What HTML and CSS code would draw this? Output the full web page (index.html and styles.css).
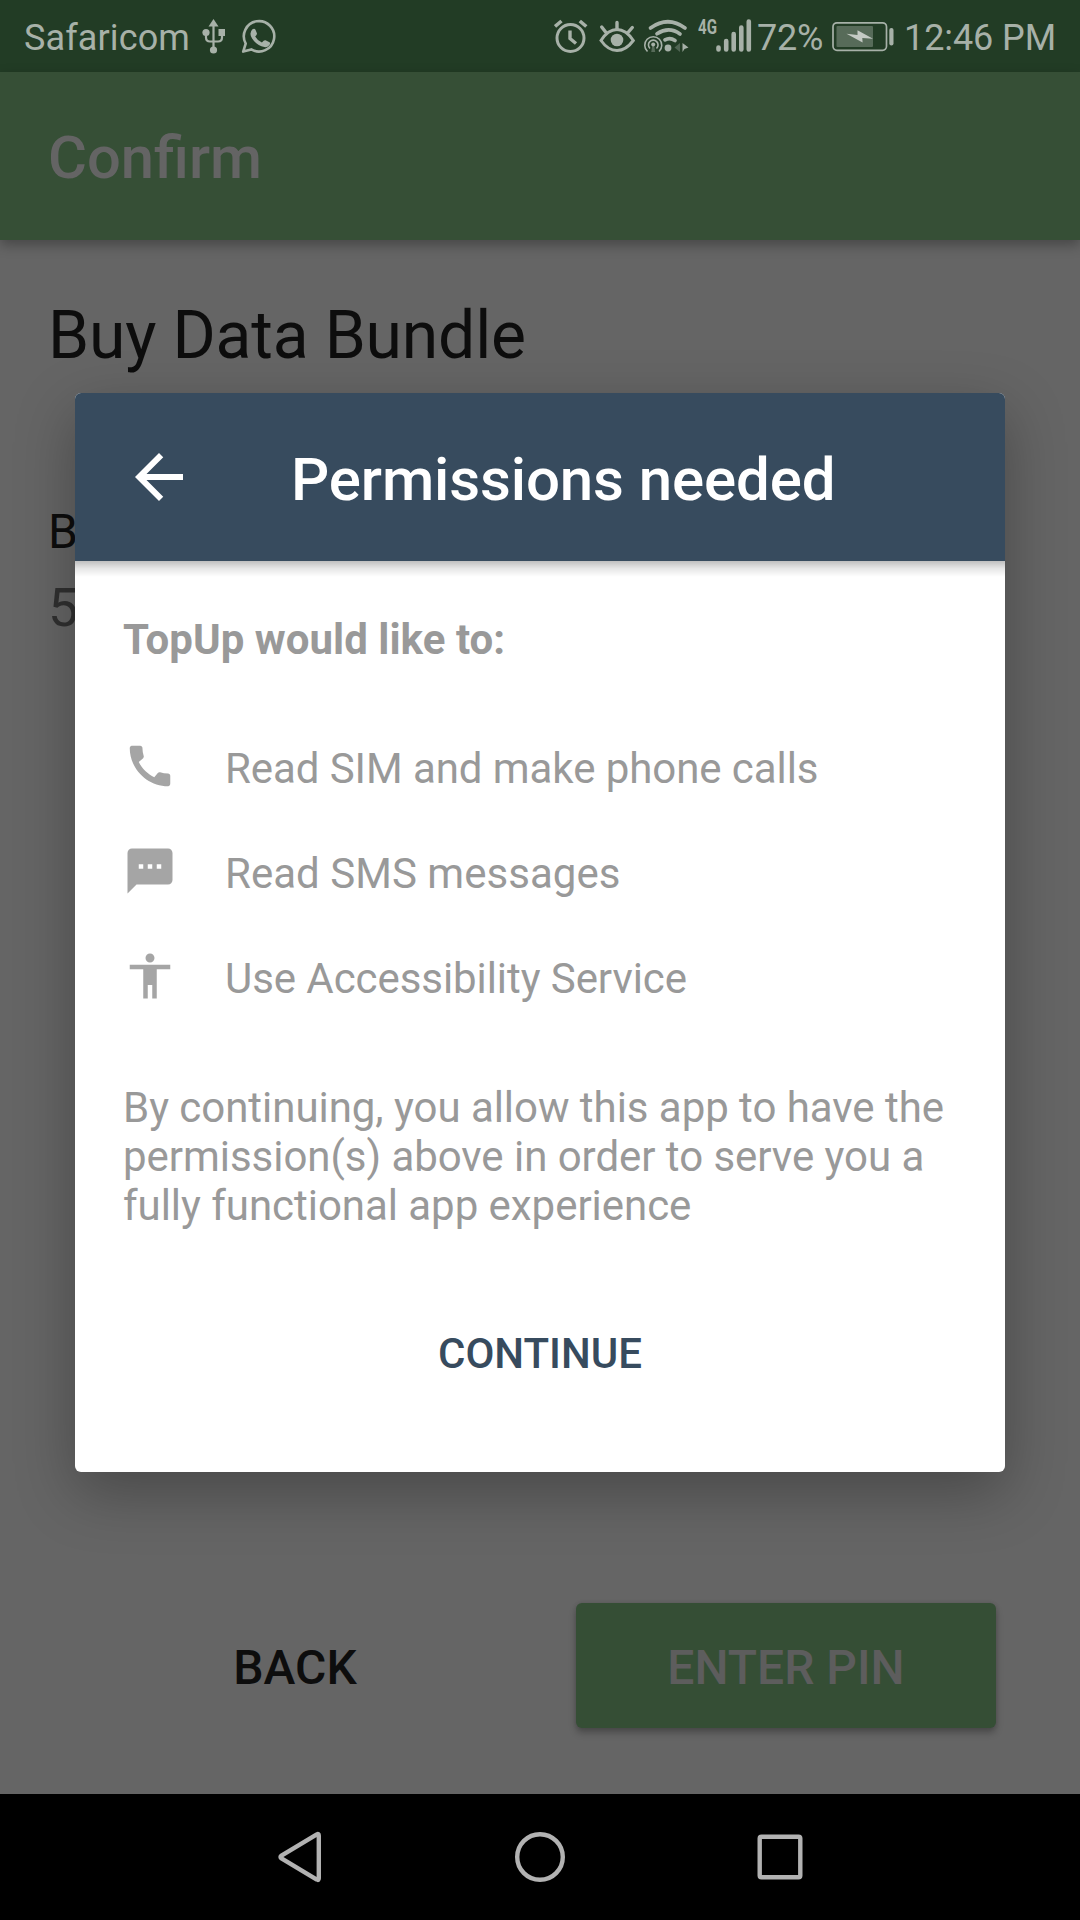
FILE: index.html
```html
<!DOCTYPE html>
<html lang="en">
<head>
<meta charset="utf-8">
<title>Confirm</title>
<link rel="stylesheet" href="styles.css">
</head>
<body>
<div class="screen">
  <header class="status">
    <span class="carrier">Safaricom</span>
    <svg class="usb" viewBox="201 0 26 72" width="26" height="72">
      <g fill="none" stroke="currentColor" stroke-width="2.2"><path d="M213.5 24V50M206 33v4.500q0 4 4 4h8q4 0 4-4V33"/></g>
      <path d="M213.500 19l5 7.500h-10z"/><circle cx="206" cy="32.500" r="3.600"/><path d="M218.500 29h6.500v7h-6.500z"/><circle cx="213.500" cy="50" r="3.600"/>
    </svg>
    <svg class="whatsapp" viewBox="240 0 37 72" width="37" height="72">
      <path fill="none" stroke="currentColor" stroke-width="2.600" stroke-linejoin="round" d="M243.200 51.600L245.700 43.600A15.200 15.200 0 1 1 251.300 49.400Z"/>
      <path d="M252.500 29.200q2.300-1.200 3.200 1l1.200 3q.4 1.300-1.700 3.200 2.500 4.400 6.700 6.200 2.400-3 3.600-2.300l4 2q1.300.8-.2 3-2 2.300-5 1.800-7.300-1.200-12.200-8.600-3.500-5.600.4-9.300z"/>
    </svg>
    <svg class="alarm" viewBox="554 0 34 72" width="34" height="72">
      <g fill="none" stroke="currentColor" stroke-width="3"><circle cx="570.500" cy="38" r="13.500"/><path d="M570 30.500v8l6 5" stroke-width="3.400"/><path d="M555 26.500l6.500-5.500M579.800 21l6.500 5.500" stroke-width="3.600"/></g>
    </svg>
    <svg class="eye" viewBox="599 0 37 72" width="37" height="72">
      <g fill="none" stroke="currentColor" stroke-width="3.400" stroke-linecap="round"><path d="M601 40.500Q608 29.500 617 29.500T633.300 40.500Q626 50.500 617 50.500T601 40.500Z" stroke-width="3"/><path d="M617 22.500v7M601.700 27l4.300 5.500M632.300 27.500l-4.300 5"/></g>
      <circle cx="617" cy="40" r="6.300"/>
    </svg>
    <svg class="wifi" viewBox="643 0 46 72" width="46" height="72">
      <g fill="none" stroke="currentColor" stroke-width="3.700" stroke-linecap="round"><path d="M650.500 28Q668 15.500 685 28M657 33.800Q669 26 680 34M665 39.800Q670 37 675 40.500"/></g>
      <g fill="none" stroke="currentColor" stroke-width="1.600"><path d="M647.500 51.500a8.500 8.500 0 1 1 11.500 0M650 48.500a4.800 4.800 0 1 1 6.500 0"/></g>
      <circle cx="653.200" cy="44.500" r="2"/><path d="M652.200 46h2l1 6h-4z" opacity=".4"/>
      <circle cx="668" cy="48" r="3.400"/><path d="M680 43v9l-5.500-4.500z" opacity=".35"/><path d="M682.500 43l6 4.500-4 1.500-2 3z"/>
    </svg>
    <span class="net"><span class="net-text">4G</span></span>
    <svg class="signal" viewBox="716 0 36 72" width="36" height="72">
      <g stroke="currentColor" stroke-width="4.600" stroke-linecap="round"><path d="M718.500 47.500v2M726.200 41v8.500M733.700 34v15.500M741.300 27.500v22M748.800 21.500v28"/></g>
    </svg>
    <span class="percent">72%</span>
    <svg class="battery" viewBox="832 0 63 72" width="63" height="72">
      <rect x="833" y="22.800" width="53.500" height="27.500" rx="4" fill="none" stroke="currentColor" stroke-width="1.700"/>
      <rect x="836.500" y="26" width="36.500" height="21" rx="1" opacity=".4"/>
      <rect x="889.300" y="28" width="4.200" height="17.500" rx="2"/>
      <path d="M846.500 33.700l11 1.300v-4.700l15.500 8.500-10.700-.9.300 4.700z" fill="#c4cac4"/>
    </svg>
    <span class="clock">12:46 PM</span>
  </header>
  <div class="appbar"><h1 class="appbar-title">Confirm</h1></div>
  <main class="page">
    <h2 class="heading">Buy Data Bundle</h2>
    <div class="label">B</div>
    <div class="value">5</div>
    <div class="actions">
      <button class="btn btn-back">BACK</button>
      <button class="btn btn-pin">ENTER PIN</button>
    </div>
  </main>
  <nav class="nav">
    <svg viewBox="0 0 60 60" width="60" height="60"><path d="M46.800 7.500Q48.800 6.200 48.800 8.800V51.200Q48.800 53.800 46.800 52.500L11.500 31.500Q9.500 30 11.500 28.500Z" class="nav-line"/></svg>
    <svg viewBox="0 0 60 60" width="60" height="60"><circle cx="30" cy="30" r="22.800" class="nav-line"/></svg>
    <svg viewBox="0 0 60 60" width="60" height="60"><rect x="9.700" y="9.700" width="40.600" height="40.600" rx="1.800" class="nav-line"/></svg>
  </nav>
  <section class="dialog" role="dialog">
    <div class="dialog-bar">
      <svg class="arrow" viewBox="0 0 24 24" width="72" height="72"><path d="M20 11H7.830l5.590-5.590L12 4l-8 8 8 8 1.410-1.410L7.830 13H20v-2z"/></svg>
      <h2 class="dialog-title">Permissions needed</h2>
    </div>
    <div class="dialog-body">
      <p class="lead">TopUp would like to:</p>
      <ul class="perms">
        <li class="perm"><svg class="perm-icon" viewBox="0 0 24 24"><path d="M20.010 15.380c-1.230 0-2.420-.2-3.530-.56-.35-.12-.74-.03-1.010.24l-1.570 1.970c-2.830-1.350-5.480-3.900-6.890-6.830l1.950-1.660c.27-.28.35-.67.240-1.020-.37-1.110-.56-2.300-.56-3.530 0-.54-.45-.99-.99-.99H4.190C3.650 3 3 3.240 3 3.990 3 13.280 10.730 21 20.010 21c.71 0 .99-.63.990-1.180v-3.450c0-.54-.45-.99-.99-.99z"/></svg><span>Read SIM and make phone calls</span></li>
        <li class="perm"><svg class="perm-icon" viewBox="0 0 24 24"><path d="M20 2H4c-1.100 0-2 .9-2 2v18l4-4h14c1.100 0 2-.9 2-2V4c0-1.100-.9-2-2-2zM9 11H7V9h2v2zm4 0h-2V9h2v2zm4 0h-2V9h2v2z"/></svg><span class="perm-natural">Read SMS messages</span></li>
        <li class="perm"><svg class="perm-icon" viewBox="0 0 24 24"><path d="M12 2c1.100 0 2 .9 2 2s-.9 2-2 2-2-.9-2-2 .9-2 2-2zm9 7h-6v13h-2v-6h-2v6H9V9H3V7h18v2z"/></svg><span>Use Accessibility Service</span></li>
      </ul>
      <p class="note">By continuing, you allow this app to have the<br>permission(s) above in order to serve you a<br>fully functional app experience</p>
      <button class="continue">CONTINUE</button>
    </div>
  </section>
</div>
</body>
</html>
```

FILE: styles.css
```css
* { box-sizing: border-box; margin: 0; padding: 0; }
body { font-family: Roboto, sans-serif; background: #000; }
h1, h2 { font-weight: 500; }
button { border: 0; background: none; font: inherit; }
svg { display: block; flex: none; fill: currentColor; }

.screen { position: relative; width: 1080px; height: 1920px; overflow: hidden; display: flex; flex-direction: column; background: #656565; white-space: nowrap; }

.status { flex: none; height: 72px; display: flex; align-items: flex-start; padding-left: 24px; background: #223c25; color: #a7b1a8; font-size: 36px; line-height: 76px; }
.carrier { width: 177px; letter-spacing: .12px; }
.whatsapp { margin-left: 13px; }
.alarm { margin-left: 277px; }
.eye { margin-left: 11px; }
.wifi { margin-left: 7px; }
.net { width: 27px; padding-left: 9px; font-weight: 700; font-size: 21px; line-height: 54px; }
.net-text { display: inline-block; transform: scaleX(.72); transform-origin: left; }
.percent { width: 76px; padding-left: 5px; letter-spacing: -.2px; }
.battery { margin-left: 4px; }
.clock { padding-left: 9px; letter-spacing: -.08px; }

.appbar { flex: none; position: relative; height: 168px; padding-left: 48px; background: #364f36; color: #646464; box-shadow: 0 5px 12px rgba(0, 0, 0, .3); }
.appbar-title { font-size: 59.700px; line-height: 173px; }

.page { flex: 1; display: flex; flex-direction: column; padding: 57px 84px 66px 48px; color: #0d0d0d; }
.heading { font-size: 66px; font-weight: 400; line-height: 77px; letter-spacing: -.17px; }
.label { margin-top: 130px; font-size: 48px; line-height: 56px; }
.value { margin-top: 16px; font-size: 54px; line-height: 64px; color: #303030; }
.actions { margin-top: auto; display: flex; justify-content: space-between; padding-left: 37px; }
.btn { width: 420px; height: 125px; padding-top: 4px; border-radius: 6px; font-size: 48px; font-weight: 500; color: #0d0d0d; line-height: 121px; }
.btn-pin { background: #354e35; color: #5d5d5d; box-shadow: 0 5px 7px rgba(0, 0, 0, .25), 0 0 4px rgba(0, 0, 0, .12); }

.nav { flex: none; height: 126px; display: flex; justify-content: center; align-items: center; gap: 180px; background: #000; }
.nav-line { fill: none; stroke: #b2b2b2; stroke-width: 4.4; }

.dialog { position: absolute; left: 75px; top: 393px; width: 930px; height: 1079px; border-radius: 6px; background: #fff; box-shadow: 0 20px 60px rgba(0, 0, 0, .29); }
.dialog-bar { position: relative; display: flex; align-items: center; height: 168px; padding-left: 48px; border-radius: 6px 6px 0 0; background: #374b5e; color: #fff; }
.dialog-bar::after { content: ""; position: absolute; left: 0; right: 0; top: 100%; height: 16px; background: linear-gradient(rgba(0, 0, 0, .25), rgba(0, 0, 0, .1) 45%, rgba(0, 0, 0, 0)); }
.dialog-title { margin-left: 96px; padding-top: 5px; font-size: 60px; line-height: 72px; letter-spacing: -.12px; }
.dialog-body { display: flex; flex-direction: column; padding: 54px 48px 0; color: #999; font-size: 42px; line-height: 49px; }
.lead { font-weight: 700; letter-spacing: .04px; }
.perms { margin-top: 49px; list-style: none; }
.perm { display: flex; align-items: center; height: 105px; gap: 48px; letter-spacing: -.07px; }
.perm span { padding-top: 5px; }
.perm-natural { letter-spacing: .03px; }
.perm-icon { width: 54px; height: 54px; color: #a5a5a5; }
.note { margin-top: 55px; letter-spacing: -.04px; }
.continue { align-self: center; margin-top: 99px; font-weight: 500; color: #374b5e; }
```
